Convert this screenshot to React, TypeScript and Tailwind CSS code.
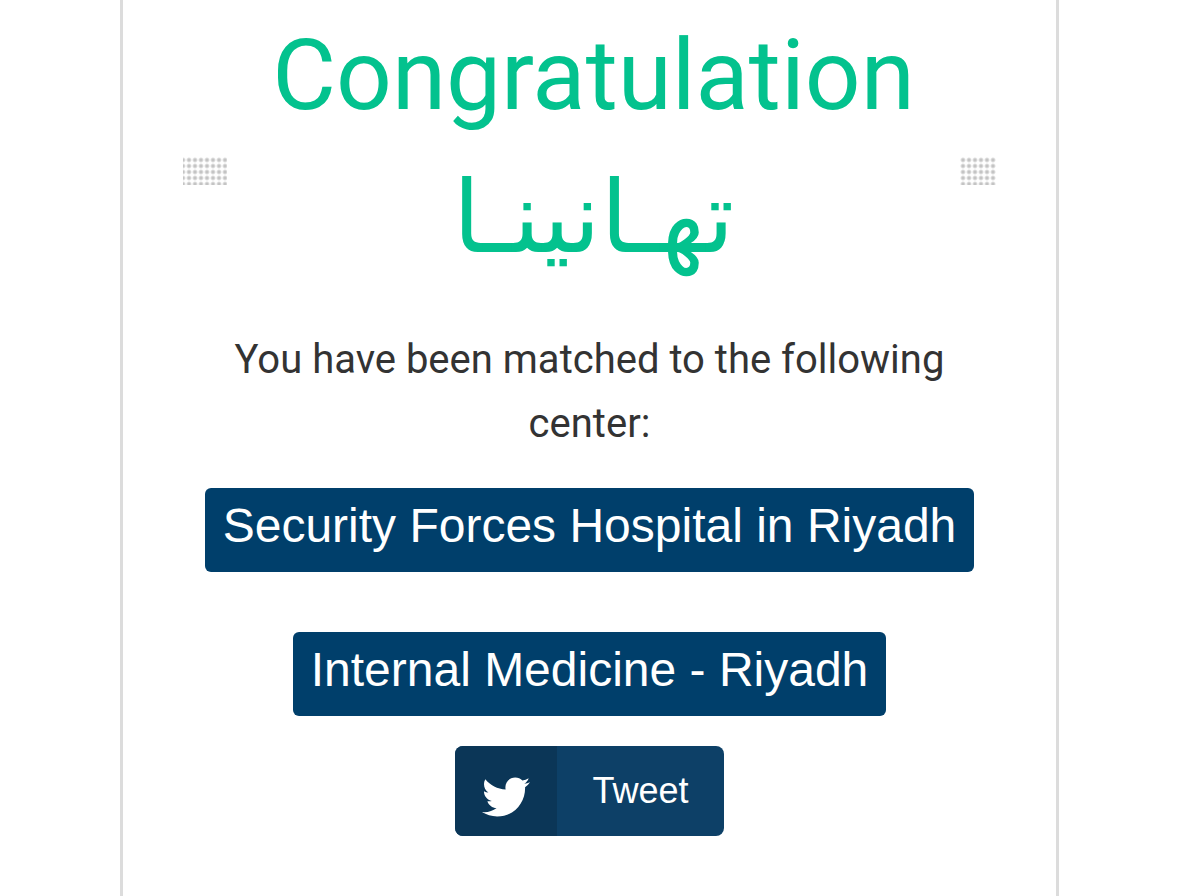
import { FaTwitter } from "react-icons/fa";

function CenterLabel({ children }: { children: string }) {
  return (
    <div className="rounded-md bg-[#003f6b] px-[18px] pt-0.5 pb-2.5 text-[48px] leading-[72px] text-white">
      {children}
    </div>
  );
}

export default function App() {
  return (
    <div className="min-h-screen bg-white px-[120px] font-['Liberation_Sans',sans-serif]">
      <main className="flex min-h-screen flex-col items-center border-x-3 border-[#dcdcdc] px-[60px] text-center">
        <header className="grid w-full grid-cols-[44px_1fr_36px] items-start">
          <div
            aria-hidden="true"
            className="mt-[157px] h-7 bg-[radial-gradient(circle,#c4c4c4_1px,transparent_3px)] bg-[length:6px_6px] bg-[position:3px_0px]"
          />
          <h1 className="pt-1 font-['Roboto',sans-serif] text-[98px] leading-[144px] font-normal text-[#03c28e]">
            Congratulation
            <span lang="ar" dir="rtl" className="block font-['DejaVu_Sans',sans-serif] text-[100px] leading-[140px]">
              تهـانينـا
            </span>
          </h1>
          <div
            aria-hidden="true"
            className="mt-[157px] h-7 bg-[radial-gradient(circle,#c4c4c4_1px,transparent_3px)] bg-[length:6px_6px]"
          />
        </header>
        <p className="mt-10 w-full max-w-[760px] font-['Roboto',sans-serif] text-[40px] leading-[64px] text-[#333]">
          You have been matched to the following center:
        </p>
        <div className="mt-8 flex flex-col items-center gap-[60px]">
          <CenterLabel>Security Forces Hospital in Riyadh</CenterLabel>
          <CenterLabel>Internal Medicine - Riyadh</CenterLabel>
        </div>
        <a href="#tweet" className="mt-[30px] flex h-[90px] overflow-hidden rounded-lg bg-[#0d4067] text-white">
          <span className="flex w-[102px] items-center justify-center bg-[#0b3657] pt-3">
            <FaTwitter className="size-12" aria-hidden="true" />
          </span>
          <span className="px-[35px] text-[36px] leading-[90px]">Tweet</span>
        </a>
      </main>
    </div>
  );
}
